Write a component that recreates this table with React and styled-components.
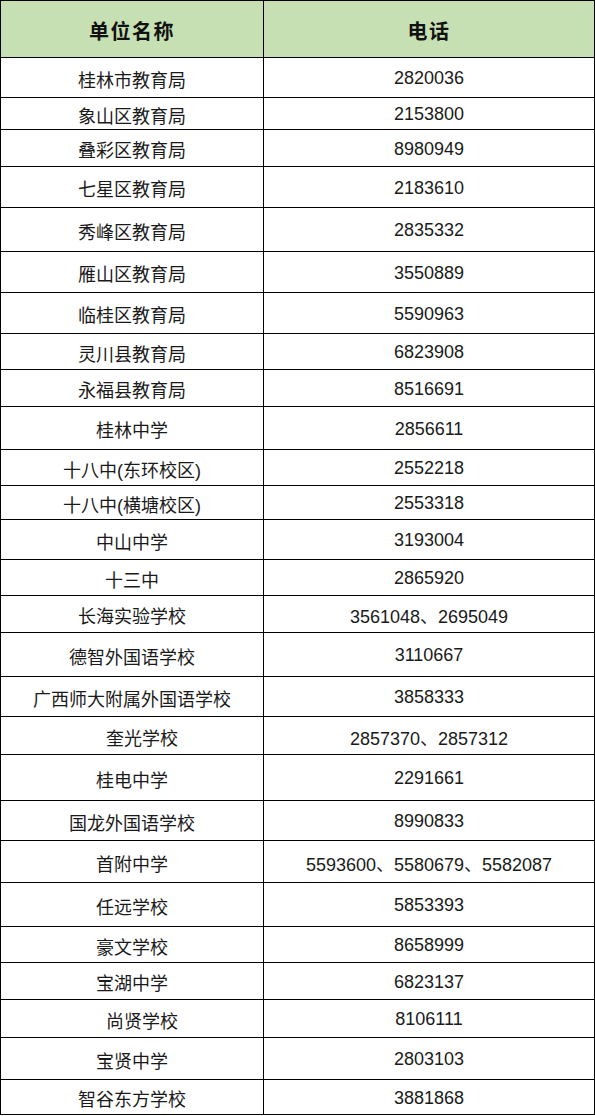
import React from 'react';
import styled, { createGlobalStyle } from 'styled-components';

const GlobalStyle = createGlobalStyle`
  html, body {
    margin: 0;
    padding: 0;
    background: #ffffff;
  }
  body {
    font-family: "Liberation Sans", "Noto Sans CJK SC", sans-serif;
  }
`;

const Table = styled.table`
  width: 595px;
  border-collapse: collapse;
  table-layout: fixed;
  color: #1a1a1a;
`;

const HeadCell = styled.th`
  height: 54px;
  padding: 2px 0 0;
  border: 1px solid #000;
  background: #c6e0b4;
  font-size: 20px;
  font-weight: 700;
  letter-spacing: 1.5px;
  color: #111;
  text-align: center;
  vertical-align: middle;
`;

// row heights in the data are the distance between grid lines
const Row = styled.tr`
  height: ${(p) => p.$h}px;
`;

const Cell = styled.td`
  padding: 2px 0 0;
  border: 1px solid #000;
  font-size: 18px;
  text-align: center;
  vertical-align: middle;
  white-space: nowrap;
  padding-left: ${(p) => p.$shift || 0}px;
`;

const rows = [
  ['桂林市教育局', '2820036', 40],
  ['象山区教育局', '2153800', 32],
  ['叠彩区教育局', '8980949', 37],
  ['七星区教育局', '2183610', 41],
  ['秀峰区教育局', '2835332', 44],
  ['雁山区教育局', '3550889', 41],
  ['临桂区教育局', '5590963', 41],
  ['灵川县教育局', '6823908', 36],
  ['永福县教育局', '8516691', 37],
  ['桂林中学', '2856611', 43],
  ['十八中(东环校区)', '2552218', 36],
  ['十八中(横塘校区)', '2553318', 34],
  ['中山中学', '3193004', 40],
  ['十三中', '2865920', 36],
  ['长海实验学校', '3561048、2695049', 37],
  ['德智外国语学校', '3110667', 44],
  ['广西师大附属外国语学校', '3858333', 40],
  ['奎光学校', '2857370、2857312', 38, 20],
  ['桂电中学', '2291661', 46],
  ['国龙外国语学校', '8990833', 40],
  ['首附中学', '5593600、5580679、5582087', 42],
  ['任远学校', '5853393', 44],
  ['豪文学校', '8658999', 36],
  ['宝湖中学', '6823137', 37],
  ['尚贤学校', '8106111', 38, 20],
  ['宝贤中学', '2803103', 42],
  ['智谷东方学校', '3881868', 35],
];

export default function App() {
  return (
    <>
      <GlobalStyle />
      <Table>
        <colgroup>
          <col style={{ width: '263px' }} />
          <col />
        </colgroup>
        <thead>
          <tr>
            <HeadCell>单位名称</HeadCell>
            <HeadCell>电话</HeadCell>
          </tr>
        </thead>
        <tbody>
          {rows.map(([name, phone, h, shift]) => (
            <Row key={name} $h={h}>
              <Cell $shift={shift}>{name}</Cell>
              <Cell>{phone}</Cell>
            </Row>
          ))}
        </tbody>
      </Table>
    </>
  );
}
